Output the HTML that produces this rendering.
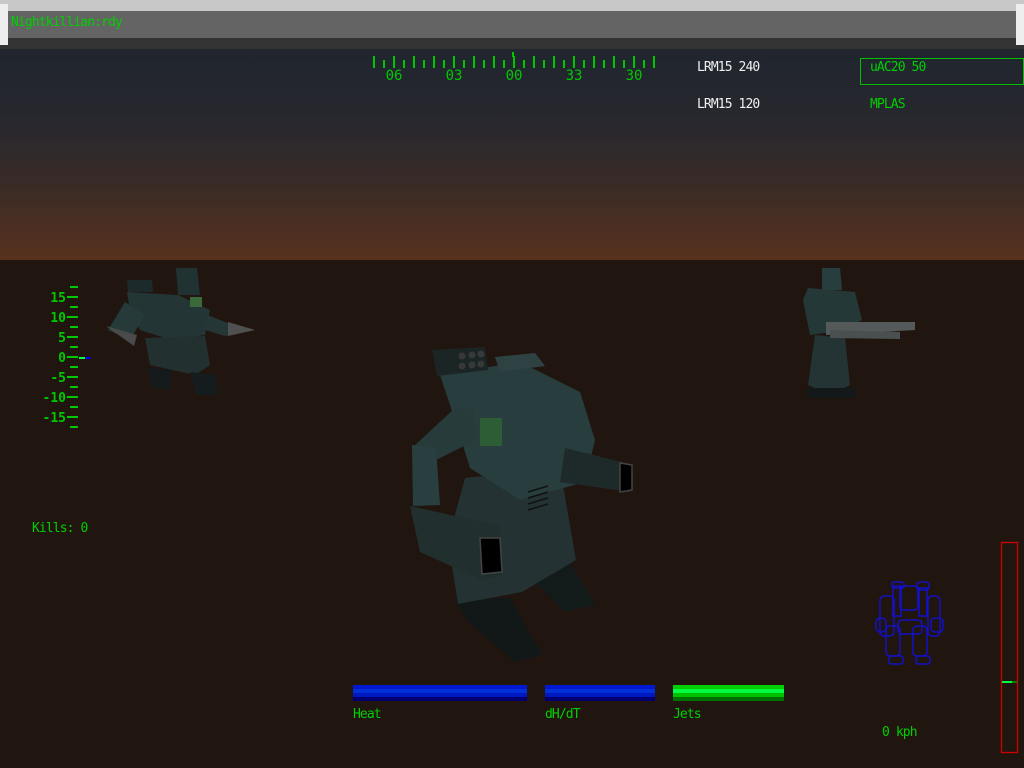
<!DOCTYPE html>
<html><head><meta charset="utf-8"><style>
html,body{margin:0;padding:0;width:1024px;height:768px;overflow:hidden;background:#21150f;font-family:"DejaVu Sans Mono","Liberation Mono",monospace;}
.abs{position:absolute}
.g{color:#00d000}
.w{color:#f0f0f0}
.t{font-size:13px;letter-spacing:-0.9px;white-space:nowrap}
</style></head><body>
<div class="abs" style="left:0;top:49px;width:1024px;height:211px;background:linear-gradient(#20252e 0%,#28282e 35%,#3a2b27 65%,#58311d 100%)"></div>
<div class="abs" style="left:0;top:0;width:1024px;height:11px;background:#c8c8c8"></div>
<div class="abs" style="left:0;top:11px;width:1024px;height:27px;background:#646464"></div>
<div class="abs" style="left:0;top:38px;width:1024px;height:11px;background:#333"></div>
<div class="abs" style="left:0;top:4px;width:8px;height:41px;background:#eee"></div>
<div class="abs" style="left:1016px;top:4px;width:8px;height:41px;background:#eee"></div>
<div class="abs g t" style="left:11px;top:15px">Nightkillian:rdy</div>

<svg class="abs" style="left:0;top:0" width="1024" height="768">
<rect x="512" y="52" width="2" height="5" fill="#00c800"/>
<g stroke="#00c800" stroke-width="2">
<path d="M374 56v12M384 60v8M394 56v12M404 60v8M414 56v12M424 60v8M434 56v12M444 60v8M454 56v12M464 60v8M474 56v12M484 60v8M494 56v12M504 60v8M514 56v12M524 60v8M534 56v12M544 60v8M554 56v12M564 60v8M574 56v12M584 60v8M594 56v12M604 60v8M614 56v12M624 60v8M634 56v12M644 60v8M654 56v12"/>
</g>
<g fill="#00c800" font-family="DejaVu Sans Mono,Liberation Mono,monospace" font-size="14" text-anchor="middle">
<text x="394" y="80">06</text><text x="454" y="80">03</text><text x="514" y="80">00</text><text x="574" y="80">33</text><text x="634" y="80">30</text>
</g>
<g stroke="#00c800" stroke-width="2">
<path d="M70 287h8M67 297h11M70 307h8M67 317h11M70 327h8M67 337h11M70 347h8M67 357h11M70 367h8M67 377h11M70 387h8M67 397h11M70 407h8M67 417h11M70 427h8"/>
</g>
<path d="M79 358h6" stroke="#00ff40" stroke-width="2"/><path d="M85 358h6" stroke="#0000e0" stroke-width="2"/>
<g fill="#00c800" font-family="DejaVu Sans Mono,Liberation Mono,monospace" font-size="13" font-weight="bold" text-anchor="end">
<text x="66" y="302">15</text><text x="66" y="322">10</text><text x="66" y="342">5</text><text x="66" y="362">0</text><text x="66" y="382">-5</text><text x="66" y="402">-10</text><text x="66" y="422">-15</text>
</g>
<rect x="860.5" y="58.5" width="163" height="26" fill="none" stroke="#00c000"/>
<!-- left mech -->
<g>
<polygon points="127,292 178,295 210,310 205,335 172,340 140,330 130,310" fill="#243536"/>
<polygon points="176,268 197,268 200,295 178,295" fill="#213233"/>
<polygon points="127,280 152,280 153,292 128,292" fill="#1d2a2b"/>
<polygon points="108,330 125,302 145,315 130,340" fill="#263a3a"/>
<polygon points="106,326 137,335 134,346" fill="#4a4a4a"/>
<polygon points="200,312 225,322 255,330 225,336 205,330" fill="#243636"/>
<polygon points="228,322 255,330 228,336" fill="#505050"/>
<polygon points="145,338 205,336 210,365 195,375 150,365" fill="#223030"/>
<polygon points="148,368 172,370 170,390 152,388" fill="#141a1b"/>
<polygon points="190,372 215,375 218,395 196,395" fill="#151c1d"/>
<rect x="190" y="297" width="12" height="10" fill="#3a6a3a"/>
</g>
<!-- right mech -->
<g>
<polygon points="822,268 840,268 842,290 822,290" fill="#283e3e"/>
<polygon points="808,288 855,292 862,320 845,330 810,335 803,300" fill="#253838"/>
<polygon points="815,335 845,338 850,385 830,395 808,385" fill="#243434"/>
<polygon points="806,388 855,388 856,398 808,398" fill="#131819"/>
<polygon points="826,322 915,322 915,330 826,335" fill="#535a59"/>
<polygon points="830,330 900,332 900,339 830,338" fill="#4a5050"/>
</g>
<!-- main mech -->
<g>
<polygon points="455,600 510,598 542,655 515,662 468,622" fill="#121818"/>
<polygon points="520,568 570,563 596,605 565,612" fill="#131a1a"/>
<polygon points="465,478 560,468 576,560 522,592 458,604 448,540" fill="#243234"/>
<polygon points="440,375 520,362 580,392 595,440 585,482 520,500 470,468 455,420" fill="#283d3e"/>
<polygon points="495,357 535,353 545,366 500,372" fill="#2e4243"/>
<polygon points="432,350 485,347 488,370 437,376" fill="#1b2526"/>
<g fill="#383838"><circle cx="462" cy="356" r="3.5"/><circle cx="472" cy="355" r="3.5"/><circle cx="481" cy="354" r="3.5"/><circle cx="462" cy="366" r="3.5"/><circle cx="472" cy="365" r="3.5"/><circle cx="481" cy="364" r="3.5"/></g>
<polygon points="413,447 456,407 474,410 476,440 432,462" fill="#273b3b"/>
<polygon points="412,445 436,448 440,505 413,506" fill="#293f3f"/>
<polygon points="410,506 500,526 502,576 482,580 420,552" fill="#212f2f"/>
<polygon points="480,538 500,538 502,572 482,574" fill="#000" stroke="#444" stroke-width="1.5"/>
<polygon points="565,448 630,464 630,492 560,482" fill="#1e2a2a"/>
<polygon points="620,463 632,465 632,490 620,492" fill="#000" stroke="#444" stroke-width="1.5"/>
<rect x="480" y="418" width="22" height="28" fill="#2d5d35"/>
<g stroke="#111" stroke-width="1.5"><path d="M528 492l20-6M528 498l20-6M528 504l20-6M528 510l20-6"/></g>
</g>
<g fill="none" stroke="#1010e0" stroke-width="1.3">
<rect x="892" y="582" width="12" height="6" rx="2"/><rect x="917" y="582" width="12" height="8" rx="3"/>
<rect x="893" y="586" width="8" height="30"/><rect x="919" y="588" width="8" height="28"/>
<rect x="900" y="586" width="18" height="24" rx="4"/>
<rect x="880" y="596" width="14" height="40" rx="4"/><rect x="928" y="596" width="12" height="40" rx="4"/>
<rect x="876" y="618" width="10" height="14" rx="4"/><rect x="931" y="618" width="12" height="14" rx="4"/>
<rect x="898" y="620" width="24" height="14" rx="4"/>
<rect x="886" y="626" width="14" height="30" rx="4"/><rect x="913" y="626" width="14" height="30" rx="4"/>
<rect x="889" y="656" width="14" height="8" rx="2"/><rect x="916" y="656" width="14" height="8" rx="2"/>
</g>
<rect x="1001.5" y="542.5" width="16" height="210" fill="none" stroke="#d00000" stroke-width="1.3"/>
<rect x="1002" y="681" width="10" height="2" fill="#00ff40"/><rect x="1012" y="681" width="5" height="2" fill="#008000"/>
<rect x="353" y="685" width="174" height="4" fill="#0018d0"/><rect x="353" y="689" width="174" height="4" fill="#0030d8"/><rect x="353" y="693" width="174" height="4" fill="#0018c0"/><rect x="353" y="697" width="174" height="4" fill="#000070"/>
<rect x="545" y="685" width="110" height="4" fill="#0018d0"/><rect x="545" y="689" width="110" height="4" fill="#0030d8"/><rect x="545" y="693" width="110" height="4" fill="#0018c0"/><rect x="545" y="697" width="110" height="4" fill="#000070"/>
<rect x="673" y="685" width="111" height="4" fill="#00d000"/><rect x="673" y="689" width="111" height="4" fill="#00ff40"/><rect x="673" y="693" width="111" height="4" fill="#00c000"/><rect x="673" y="697" width="111" height="4" fill="#007000"/>
</svg>
<div class="abs w t" style="left:697px;top:60px">LRM15 240</div>
<div class="abs w t" style="left:697px;top:97px">LRM15 120</div>
<div class="abs g t" style="left:870px;top:60px">uAC20 50</div>
<div class="abs g t" style="left:870px;top:97px">MPLAS</div>
<div class="abs g t" style="left:32px;top:521px">Kills: 0</div>
<div class="abs g t" style="left:353px;top:707px">Heat</div>
<div class="abs g t" style="left:545px;top:707px">dH/dT</div>
<div class="abs g t" style="left:673px;top:707px">Jets</div>
<div class="abs g t" style="left:882px;top:725px">0 kph</div>
</body></html>
